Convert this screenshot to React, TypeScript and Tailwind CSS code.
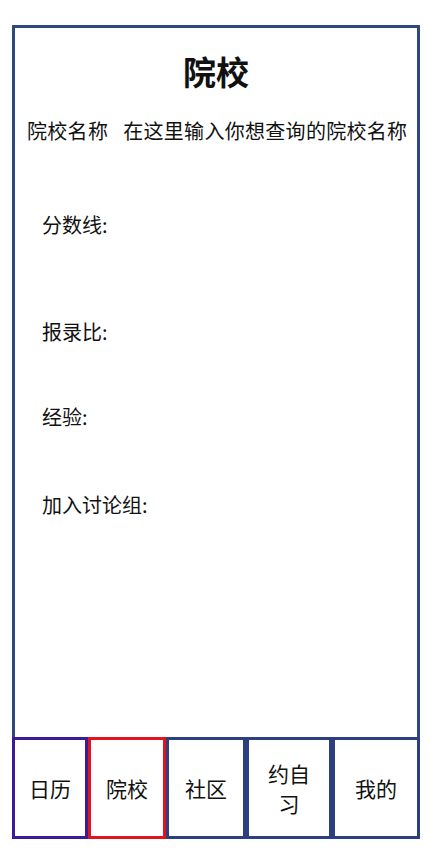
export default function App() {
  const font = { fontFamily: '"Microsoft YaHei", "Noto Sans CJK SC", "Noto Sans", sans-serif' };
  const tabs = [
    { label: "日历", w: "w-[76px]", c: "border-[#3b1c96]" },
    { label: "院校", w: "w-[78px]", c: "border-[#e0141e]" },
    { label: "社区", w: "w-[80px]", c: "border-[#2c3f80]" },
    { label: "约自\n习", w: "w-[86px]", c: "border-[#2c3f80]" },
    { label: "我的", w: "w-[88px]", c: "border-[#2c3f80]" },
  ];
  return (
    <div className="min-h-[852px] w-[435px] bg-white text-[#111]" style={font}>
      <div className="ml-[12px] pt-[25px] w-[408px]">
        <div className="h-[712px] border-[3px] border-b-0 border-[#2e4a7c] flex flex-col">
          <div className="pt-[23px] text-center text-[33px] leading-[40px] font-bold">院校</div>
          <div className="mt-[26px] flex text-[20px] leading-[28px] pl-[12px] whitespace-nowrap tracking-[0.3px]">
            <span>院校名称</span>
            <span className="ml-[15px]">在这里输入你想查询的院校名称</span>
          </div>
          <div className="pl-[27px] text-[20px] leading-[28px]">
            <div className="mt-[66px]">分数线:</div>
            <div className="mt-[79px]">报录比:</div>
            <div className="mt-[57px]">经验:</div>
            <div className="mt-[60px]">加入讨论组:</div>
          </div>
        </div>
        <div className="flex h-[102px]">
          {tabs.map((t) => (
            <div
              key={t.label}
              className={`${t.w} ${t.c} border-[3px] flex items-center justify-center text-center text-[21px] leading-[30px] whitespace-pre-line`}
            >
              {t.label}
            </div>
          ))}
        </div>
      </div>
    </div>
  );
}
